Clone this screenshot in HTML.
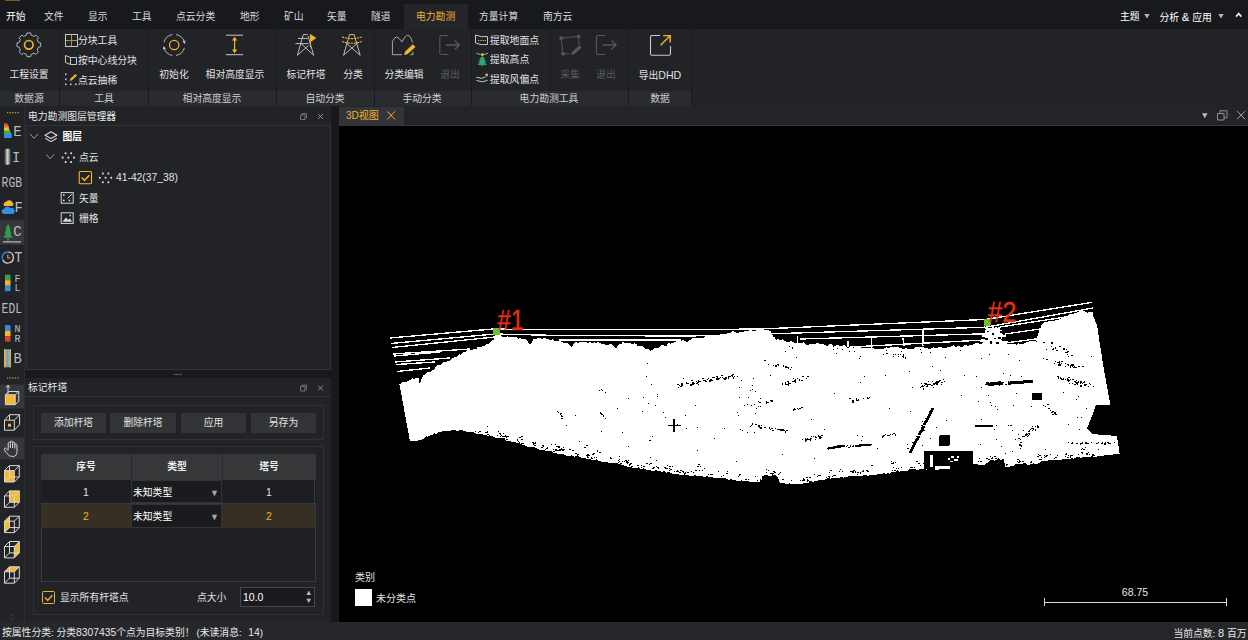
<!DOCTYPE html>
<html>
<head>
<meta charset="utf-8">
<title>电力勘测</title>
<style>
html,body{margin:0;padding:0;}
body{width:1248px;height:640px;overflow:hidden;background:#1b1c1f;position:relative;
 font-family:"Liberation Sans","Noto Sans CJK SC",sans-serif;font-size:9.8px;color:#e2e2e2;}
.abs{position:absolute;}
div,span{box-sizing:border-box;}
.t{position:absolute;white-space:nowrap;line-height:14px;height:14px;}
.c{transform:translateX(-50%);}
/* top tab bar */
#tabbar{position:absolute;left:0;top:0;width:1248px;height:29px;background:#18191c;}
#tabbar .t{top:10px;color:#dcdcdc;}
#acttab{position:absolute;left:404px;top:4px;width:63.6px;height:25px;background:#242529;}
/* ribbon */
#ribbon{position:absolute;left:0;top:29px;width:1248px;height:62px;background:#222327;}
#grow{position:absolute;left:0;top:91px;width:1248px;height:15px;background:#222327;}
#grow .g{position:absolute;top:0;height:15px;background:#2a2b2f;}
#grow .t{top:0;color:#d0d0d0;line-height:15px;height:15px;}
.sep{position:absolute;top:29px;width:1px;height:77px;background:#1a1b1e;}
#ribbon .t{color:#e6e6e6;}
.dis{color:#5a5b5f !important;}
/* docks */
#lefttb{position:absolute;left:0;top:106px;width:25px;height:516px;background:#222327;}
.ptitle{position:absolute;background:#222327;}
#status{position:absolute;left:0;top:622px;width:1248px;height:18px;background:#26272b;}
#status .t{top:3.7px;color:#e8e8e8;}
#view{position:absolute;left:339px;top:126px;width:909px;height:496px;background:#000;}
.btn{position:absolute;top:413px;height:20px;background:#333437;text-align:center;line-height:19px;color:#e0e0e0;}
.cell{position:absolute;text-align:center;}
</style>
</head>
<body>
<!-- ===== top tab bar ===== -->
<div id="tabbar">
 <div class="abs" style="left:5px;top:0;width:15px;height:1px;background:#7a5a22"></div>
 <div id="acttab"></div>
 <span class="t" style="left:6px;color:#fff">开始</span>
 <span class="t" style="left:44px">文件</span>
 <span class="t" style="left:88px">显示</span>
 <span class="t" style="left:132px">工具</span>
 <span class="t" style="left:176px">点云分类</span>
 <span class="t" style="left:240px">地形</span>
 <span class="t" style="left:284px">矿山</span>
 <span class="t" style="left:327px">矢量</span>
 <span class="t" style="left:371px">隧道</span>
 <span class="t" style="left:416px;color:#f0b232">电力勘测</span>
 <span class="t" style="left:479px">方量计算</span>
 <span class="t" style="left:543px">南方云</span>
 <span class="t" style="left:1120px;color:#fff">主题</span>
 <span class="t" style="left:1159.5px;color:#fff">分析 <span style="font-size:11.5px">&amp;</span> 应用</span>
 <svg class="abs" style="left:1140px;top:8px" width="108" height="16" viewBox="1140 8 108 16"><path d="M1144.3 14h5.4l-2.7 4.6z M1218.3 14h5.4l-2.7 4.6z" fill="#b5b5b5"/><path d="M1236 16.6l2.7-3l2.7 3" fill="none" stroke="#e6e6e6" stroke-width="1.7"/></svg>
</div>

<!-- ===== ribbon ===== -->
<div id="ribbon"></div>
<div id="grow">
 <div class="g" style="left:0;width:59px"></div>
 <div class="g" style="left:60px;width:88px"></div>
 <div class="g" style="left:149px;width:127px"></div>
 <div class="g" style="left:277px;width:97px"></div>
 <div class="g" style="left:375px;width:96px"></div>
 <div class="g" style="left:472px;width:156px"></div>
 <div class="g" style="left:629px;width:62px"></div>
 <span class="t c" style="left:29px">数据源</span>
 <span class="t c" style="left:104px">工具</span>
 <span class="t c" style="left:212px">相对高度显示</span>
 <span class="t c" style="left:325px">自动分类</span>
 <span class="t c" style="left:422px">手动分类</span>
 <span class="t c" style="left:549px">电力勘测工具</span>
 <span class="t c" style="left:660px">数据</span>
</div>
<div class="sep" style="left:59px"></div>
<div class="sep" style="left:148px"></div>
<div class="sep" style="left:276px"></div>
<div class="sep" style="left:374px"></div>
<div class="sep" style="left:471px"></div>
<div class="sep" style="left:550px;height:62px"></div>
<div class="sep" style="left:628px"></div>
<div class="sep" style="left:691px"></div>

<div id="ribtext" style="position:absolute;left:0;top:0">
 <span class="t c" style="left:29px;top:68px">工程设置</span>
 <span class="t" style="left:78px;top:33.5px">分块工具</span>
 <span class="t" style="left:78px;top:53.5px">按中心线分块</span>
 <span class="t" style="left:78px;top:73.5px">点云抽稀</span>
 <span class="t c" style="left:174px;top:68px">初始化</span>
 <span class="t c" style="left:235px;top:68px">相对高度显示</span>
 <span class="t c" style="left:306px;top:68px">标记杆塔</span>
 <span class="t c" style="left:353px;top:68px">分类</span>
 <span class="t c" style="left:404px;top:68px">分类编辑</span>
 <span class="t c dis" style="left:450px;top:68px">退出</span>
 <span class="t" style="left:490px;top:33.8px">提取地面点</span>
 <span class="t" style="left:490px;top:53.3px">提取高点</span>
 <span class="t" style="left:490px;top:73px">提取风偏点</span>
 <span class="t c dis" style="left:570px;top:68px">采集</span>
 <span class="t c dis" style="left:606px;top:68px">退出</span>
 <span class="t c" style="left:660px;top:68px">导出<span style="font-size:10.6px">DHD</span></span>
</div>
<!--RIBS--><svg style="position:absolute;left:0;top:0" width="700" height="92" viewBox="0 0 700 92"><path d="M26.49 35.17 L26.92 32.95 L30.68 32.95 L31.11 35.17 L33.97 36.36 L35.85 35.09 L38.51 37.75 L37.24 39.63 L38.43 42.49 L40.65 42.92 L40.65 46.68 L38.43 47.11 L37.24 49.97 L38.51 51.85 L35.85 54.51 L33.97 53.24 L31.11 54.43 L30.68 56.65 L26.92 56.65 L26.49 54.43 L23.63 53.24 L21.75 54.51 L19.09 51.85 L20.36 49.97 L19.17 47.11 L16.95 46.68 L16.95 42.92 L19.17 42.49 L20.36 39.63 L19.09 37.75 L21.75 35.09 L23.63 36.36Z" fill="none" stroke="#b4b4b4" stroke-width="1" stroke-linejoin="round"/>
<circle cx="28.8" cy="44.8" r="4.3" fill="none" stroke="#f0b429" stroke-width="1.7"/>
<path d="M71.5 34.5V46.5 M65.5 40.5H77.5" stroke="#b08d4c" stroke-width="1" fill="none"/><rect x="65.5" y="34.5" width="12" height="12" fill="none" stroke="#c9c9c9" stroke-width="1"/>
<path d="M65.5 55.5 L70.5 57.5 V64.5 L65.5 62.5 Z M70.5 57.5 H76.5 V64.5 H70.5" fill="none" stroke="#c9c9c9" stroke-width="1"/>
<rect x="65" y="73.5" width="1.6" height="1.6" fill="#c9c9c9"/><rect x="65" y="78.5" width="1.6" height="1.6" fill="#c9c9c9"/><rect x="65" y="83.5" width="1.6" height="1.6" fill="#c9c9c9"/><rect x="70" y="83.5" width="1.6" height="1.6" fill="#c9c9c9"/><rect x="75" y="83.5" width="1.6" height="1.6" fill="#c9c9c9"/><path d="M69.5 81 L70.5 78.5 L75.5 74 L77 75.5 L72 80.2 Z" fill="#f0b429"/>
<path d="M163.96 42.26 A10.6 10.6 0 0 1 172.36 34.56 M176.04 34.56 A10.6 10.6 0 0 1 184.44 42.26 M184.44 47.74 A10.6 10.6 0 0 1 176.04 55.44 M172.36 55.44 A10.6 10.6 0 0 1 163.96 47.74" fill="none" stroke="#b4b4b4" stroke-width="1"/>
<path d="M182.5 41.5 l3 -1 l-0.5 3.4z M166 48.5 l-3 1 l0.5 -3.4z" fill="#c9c9c9"/>
<circle cx="174.2" cy="45" r="4.7" fill="none" stroke="#f0b429" stroke-width="1.2"/>
<path d="M226 35.2H243 M226 54.7H243" stroke="#c9c9c9" stroke-width="1" fill="none"/>
<path d="M234.6 38.5V51.5" stroke="#f0b429" stroke-width="1.2" fill="none"/><path d="M234.6 36.8 l2.6 3.6 h-5.2z M234.6 53.2 l2.6 -3.6 h-5.2z" fill="#f0b429"/>
<path d="M303.3 34.6 H307.6 M303.3 34.6 L297.4 55.3 M308 36 L313.7 55.3 M297.4 55.3 L308.5 45.5 M313.7 55.3 L300.8 43.3 M298 38.4H307.8 M295.4 43.6H308.5" fill="none" stroke="#bdbdbd" stroke-width="1"/>
<path d="M310.4 34.2V47.3" stroke="#f0b429" stroke-width="1.1"/><path d="M310.6 34.2 L316.4 38 L310.6 41.9Z" fill="#f0b429"/>
<path d="M349.6 34.6 H354.1 M349.6 34.6 L343.5 55.3 M354.1 34.6 L360.2 55.3 M343.5 55.3 L356.7 43.8 M360.2 55.3 L347 43.8" fill="none" stroke="#bdbdbd" stroke-width="1"/>
<path d="M342 37 Q352 40.2 361.8 37 M342 41.6 Q352 44.8 361.8 41.6" fill="none" stroke="#f0b429" stroke-width="1.1" stroke-dasharray="2.2 0.8"/>
<path d="M402 54.7 H392.4 V41.5 Q394.5 37 396.5 37 Q398.5 37 402 41.9 Q405.5 35.2 407.8 35.2 Q410.5 35.5 412.6 42.5 M410.3 54.7H412.9V51.8" fill="none" stroke="#ababab" stroke-width="1"/>
<path d="M404 54.9 L405 51.8 L412.8 44.3 L415.5 47 L407.4 54.2 Z" fill="#f0b429"/>
<path d="M448.3 35.5 H441.3 Q439.8 35.5 439.8 37 V53 Q439.8 54.5 441.3 54.5 H448.3" fill="none" stroke="#56575b" stroke-width="1.1"/><path d="M445.8 45 H459.3 M454.8 40.5 L459.3 45 L454.8 49.5" fill="none" stroke="#56575b" stroke-width="1.4"/>
<path d="M605 35.5 H598 Q596.5 35.5 596.5 37 V53 Q596.5 54.5 598 54.5 H605" fill="none" stroke="#56575b" stroke-width="1.1"/><path d="M602.5 45 H616 M611.5 40.5 L616 45 L611.5 49.5" fill="none" stroke="#56575b" stroke-width="1.4"/>
<path d="M475.5 35 Q481 37.5 487.5 36.5 V44.5 Q481 45.5 475.5 43 Z" fill="none" stroke="#c9c9c9" stroke-width="1"/><path d="M478 40.5H486" stroke="#f0b429" stroke-width="1.2" stroke-dasharray="1.3 1" fill="none"/>
<path d="M482.3 56 L485.5 59.3 H484 L486.5 62.2 H484.6 L487 65 H477.6 L480 62.2 H478.1 L480.6 59.3 H479.1Z" fill="#2aa76a"/><rect x="481.6" y="64.5" width="1.4" height="1.6" fill="#2aa76a"/>
<circle cx="482.3" cy="54.6" r="1.5" fill="#f0b429"/><path d="M476.5 53.2 L480.5 54.6 M488 53.2 L484 54.6" stroke="#c9c9c9" stroke-width="0.8"/>
<path d="M476.5 77.3 Q482 79.5 485.5 77 M476.5 80.5 Q482.5 83.3 487.5 80.3" fill="none" stroke="#c9c9c9" stroke-width="1"/><circle cx="486.7" cy="75" r="1.4" fill="#f0b429"/>
<path d="M561.2 38.2 L578.6 36.4 L579 45 M561.2 38.2 L563 53.8 H569.5" fill="none" stroke="#56575b" stroke-width="1"/>
<circle cx="561.2" cy="38.2" r="1.9" fill="#56575b"/><circle cx="578.6" cy="36.4" r="1.9" fill="#56575b"/><circle cx="563" cy="53.8" r="1.9" fill="#56575b"/>
<path d="M571 55 L572 52 L579.5 45.2 L581.8 47.6 L574.2 54.2Z" fill="#56575b"/>
<path d="M660 35.5 H652 Q650.5 35.5 650.5 37 V53.8 Q650.5 55.3 652 55.3 H669 Q670.5 55.3 670.5 53.8 V46" fill="none" stroke="#c9c9c9" stroke-width="1.1"/>
<path d="M660.6 45.2 L670 35.8 M663.2 35.6 H670.2 V42.6" fill="none" stroke="#f0b429" stroke-width="1.4"/></svg><!--RIBE-->

<!-- ===== left toolbar ===== -->
<div id="lefttb"></div><div class="abs" style="left:24px;top:106px;width:1px;height:516px;background:#2c2d31"></div>
<!--LTS--><!--LTE-->

<!-- ===== layer manager panel ===== -->
<div class="abs" style="left:25px;top:106px;width:306px;height:264px;background:#222327"></div>
<div class="abs" style="left:26px;top:125px;width:305px;height:244.5px;background:#222327;border:1px solid #323338"></div>
<span class="t" style="left:28px;top:110px;color:#e8e8e8">电力勘测图层管理器</span>
<span class="t" style="left:62.5px;top:130.2px;color:#fff;font-weight:bold">图层</span>
<span class="t" style="left:79px;top:150.7px">点云</span>
<span class="t" style="left:116px;top:171px;font-size:10.3px">41-42(37_38)</span>
<span class="t" style="left:79px;top:191.7px">矢量</span>
<span class="t" style="left:79px;top:211.5px">栅格</span>

<!-- splitters -->
<div class="abs" style="left:25px;top:369.5px;width:315px;height:8.5px;background:#18191c"></div>
<div class="abs" style="left:331px;top:106px;width:9px;height:516px;background:#18191c"></div>

<!-- ===== mark tower panel ===== -->
<div class="abs" style="left:25px;top:378px;width:306px;height:244px;background:#222327"></div>
<span class="t" style="left:28px;top:381px;color:#e8e8e8">标记杆塔</span>
<div class="abs" style="left:25px;top:396px;width:306px;height:1px;background:#303135"></div>
<div class="abs" style="left:33px;top:405px;width:291px;height:35px;border:1px solid #303135"></div>
<div class="btn" style="left:41px;width:65px">添加杆塔</div>
<div class="btn" style="left:110px;width:66px">删除杆塔</div>
<div class="btn" style="left:181px;width:65px">应用</div>
<div class="btn" style="left:251px;width:65px">另存为</div>
<div class="abs" style="left:33px;top:446px;width:291px;height:168.5px;border:1px solid #303135"></div>
<!-- table -->
<div class="abs" style="left:41px;top:454px;width:275px;height:128px;background:#1f2023;border:1px solid #3a3b3f"></div>
<div class="abs" style="left:41px;top:454px;width:275px;height:26px;background:#363739"></div>
<div class="abs" style="left:131px;top:454px;width:1px;height:26px;background:#28292c"></div>
<div class="abs" style="left:222px;top:454px;width:1px;height:26px;background:#28292c"></div>
<span class="t c" style="left:86px;top:460px;font-weight:bold;color:#eee">序号</span>
<span class="t c" style="left:177px;top:460px;font-weight:bold;color:#eee">类型</span>
<span class="t c" style="left:269px;top:460px;font-weight:bold;color:#eee">塔号</span>
<!-- row1 -->
<div class="abs" style="left:41px;top:480px;width:275px;height:23px;background:#1d1e21"></div>
<div class="abs" style="left:131px;top:480px;width:91px;height:23px;background:#1a1b1e;border:1px solid #323337"></div>
<div class="abs" style="left:41px;top:503px;width:275px;height:1px;background:#38393d"></div>
<div class="abs" style="left:314px;top:480px;width:1px;height:23px;background:#38393d"></div>
<span class="t c" style="left:86px;top:485px;font-size:10.5px">1</span>
<span class="t" style="left:133px;top:485.6px;color:#fff">未知类型</span>
<span class="t" style="left:210px;top:485.5px;font-size:9px;color:#aaa">▼</span>
<span class="t c" style="left:269px;top:485px;font-size:10.5px">1</span>
<!-- row2 -->
<div class="abs" style="left:41px;top:504px;width:274px;height:23.5px;background:#362f24"></div>
<div class="abs" style="left:131px;top:504px;width:91px;height:24px;background:#1a1b1e;border:1px solid #323337"></div>
<span class="t c" style="left:86px;top:509px;font-size:10.5px;color:#f0b232">2</span>
<span class="t" style="left:133px;top:509.5px;color:#fff">未知类型</span>
<span class="t" style="left:210px;top:510px;font-size:9px;color:#aaa">▼</span>
<span class="t c" style="left:269px;top:509px;font-size:10.5px;color:#f0b232">2</span>
<!-- bottom controls -->
<div class="abs" style="left:41.8px;top:591px;width:13px;height:13px;border:1.1px solid #f0b429;border-radius:1.5px"></div>
<svg class="abs" style="left:41.8px;top:591px" width="13" height="13" viewBox="0 0 13 13"><path d="M3 6.6l2.7 2.9l4.6-5.2" fill="none" stroke="#f0b429" stroke-width="1.5"/></svg>
<span class="t" style="left:60px;top:590.5px">显示所有杆塔点</span>
<span class="t" style="left:197px;top:590.5px">点大小</span>
<div class="abs" style="left:240px;top:586.5px;width:75px;height:20.5px;background:#1a1b1e;border:1px solid #46474b"></div>
<span class="t" style="left:243px;top:590px;font-size:10.5px;color:#fff">10.0</span>
<span class="t" style="left:305px;top:585.6px;font-size:7.5px;color:#bbb">▲</span>
<span class="t" style="left:305px;top:594.2px;font-size:7.5px;color:#bbb">▼</span>

<!--LSVGS--><svg style="position:absolute;left:0;top:0" width="340" height="640" viewBox="0 0 340 640"><rect x="7.0" y="112" width="1.3" height="1.3" fill="#c9952f"/><rect x="9.6" y="112" width="1.3" height="1.3" fill="#c9952f"/><rect x="12.2" y="112" width="1.3" height="1.3" fill="#c9952f"/><rect x="14.8" y="112" width="1.3" height="1.3" fill="#c9952f"/><rect x="17.4" y="112" width="1.3" height="1.3" fill="#c9952f"/>
<rect x="7.0" y="377.3" width="1.3" height="1.3" fill="#c9952f"/><rect x="9.6" y="377.3" width="1.3" height="1.3" fill="#c9952f"/><rect x="12.2" y="377.3" width="1.3" height="1.3" fill="#c9952f"/><rect x="14.8" y="377.3" width="1.3" height="1.3" fill="#c9952f"/><rect x="17.4" y="377.3" width="1.3" height="1.3" fill="#c9952f"/>
<rect x="0" y="219.8" width="24" height="25" fill="#36373b"/><rect x="3" y="241.3" width="18" height="1.2" fill="#bdbdbd"/>
<path d="M4 138.0 V124.0 Q6.5 122.5 8 125.5 L9.5 130.5 L11.8 134.5 V138.0Z" fill="#2f8fe0"/><path d="M4 134.0 V124.0 Q6.5 122.5 8 125.5 L9.5 130.5 L11.4 134.0Z" fill="#3fae49"/><path d="M4 130.5 V124.0 Q6.5 122.5 8 125.5 L9.5 130.5Z" fill="#f2c232"/><path d="M4 128.0 V124.0 Q6.5 122.5 8 125.5 L8.7 128.0Z" fill="#f28b30"/><path d="M4 125.7 V124.0 Q6.5 122.5 8 125.5 L8 125.7Z" fill="#e2402a"/>
<defs><linearGradient id="gi" x1="0" x2="1" y1="0" y2="0"><stop offset="0" stop-color="#444"/><stop offset=".5" stop-color="#cfcfcf"/><stop offset="1" stop-color="#555"/></linearGradient></defs><rect x="4.5" y="148.7" width="6" height="16" rx="2" fill="url(#gi)"/>
<path d="M4 206.1 a3 3 0 0 1 2.5 -4.5 a3.4 3.4 0 0 1 6 0.8 a2.3 2.3 0 0 1 0 3.7Z" fill="#f2b632"/><path d="M3.5 214.1 a2.8 2.8 0 0 1 0.5 -5.4 a3.6 3.6 0 0 1 6.4 -0.6 a3 3 0 0 1 2 6Z" fill="#2f8fe0"/>
<path d="M8 223.8 L10.6 229.3 H9.6 L11.6 233.5 H10.2 L12.3 237.8 H3.7 L5.8 233.5 H4.4 L6.4 229.3 H5.4Z" fill="#2e9d4e"/><rect x="7.3" y="237.8" width="1.4" height="3" fill="#2e9d4e"/>
<path d="M7.8 252.0 A5.5 5.5 0 1 1 2.8 259.7" fill="none" stroke="#d8d8d8" stroke-width="1.2"/><path d="M2.6 259.5 A5.5 5.5 0 0 1 7.6 252.0" fill="none" stroke="#2f8fe0" stroke-width="1.3"/><path d="M7.8 254.5 V258.0 H10.8" fill="none" stroke="#f28b30" stroke-width="1.2"/>
<rect x="5" y="274.7" width="5.5" height="5.5" fill="#3fa043"/><rect x="5" y="280.2" width="5.5" height="5.5" fill="#f2b632"/><rect x="5" y="285.7" width="5.5" height="5.5" fill="#2f8fe0"/>
<rect x="5" y="325.1" width="5.5" height="5.5" fill="#2f8fe0"/><rect x="5" y="330.6" width="5.5" height="5.5" fill="#f2b632"/><rect x="5" y="336.1" width="5.5" height="5.5" fill="#d8452c"/>
<rect x="4" y="349.29999999999995" width="7" height="18" fill="#5f9fd0"/><rect x="4" y="349.29999999999995" width="1.8" height="18" fill="#e3b04a"/><rect x="9.4" y="349.29999999999995" width="1.6" height="18" fill="#e3b04a"/><path d="M6.6 350.29999999999995v16 M8.4 350.29999999999995v16" stroke="#d8c088" stroke-width="0.8" stroke-dasharray="1 1"/>
<g font-family="'Liberation Mono',monospace" fill="#bcbcbc"><text x="13.2" y="135.7" font-size="13.8">E</text><text x="12" y="161.6" font-size="13.8">I</text><text x="1.6" y="186.8" font-size="13.8" textLength="20.4" lengthAdjust="spacingAndGlyphs">RGB</text><text x="14.4" y="211.8" font-size="13.8">F</text><text x="13.2" y="236.2" font-size="13.8">C</text><text x="14.2" y="262.2" font-size="13.8">T</text><text x="14.5" y="281.5" font-size="10" >F</text><text x="14.5" y="291.1" font-size="10" >L</text><text x="1.6" y="312.8" font-size="13.8" textLength="20.4" lengthAdjust="spacingAndGlyphs">EDL</text><text x="14.5" y="331.9" font-size="10" >N</text><text x="14.5" y="341.5" font-size="10" >R</text><text x="13.6" y="363.0" font-size="13.8">B</text></g>
<rect x="0" y="384.5" width="24" height="24" fill="#36373b"/>
<rect x="0" y="437.5" width="24" height="22" fill="#36373b"/>
<rect x="5.4" y="394.8" width="9.8" height="9.8" fill="#f6b92c"/><path d="M5.4 394.8H15.2V404.6H5.4Z M5.4 394.8L9 391.5H18.8L15.2 394.8 M18.8 391.5V401.2L15.2 404.6" fill="none" stroke="#d8d8d8" stroke-width="1"/><path d="M8 394V385.5 M6.2 387.6L8 385.2L9.8 387.6" fill="none" stroke="#d8d8d8" stroke-width="1"/>
<path d="M4.5 420.2H14.3V430.2H4.5Z M4.5 420.2L9.5 414.7H19.6L14.3 420.2 M19.6 414.7V424.7L14.3 430.2 M9.5 414.7V420.2" fill="none" stroke="#d8d8d8" stroke-width="1"/><rect x="8" y="423.7" width="3" height="3" fill="#f6b92c"/>
<path d="M8.2 449.5 V443.5 a1.1 1.1 0 0 1 2.2 0 V448.0 M10.4 443.0 V442.2 a1.1 1.1 0 0 1 2.2 0 V448.0 M12.6 443.2 a1.1 1.1 0 0 1 2.2 0 V448.5 M14.8 445.2 a1.1 1.1 0 0 1 2.2 0 V451.5 Q17 456.5 12.5 456.5 Q9 456.5 7 453.5 L4.3 449.8 a1.2 1.2 0 0 1 1.9 -1.4 L8.2 450.7" fill="none" stroke="#d8d8d8" stroke-width="1" stroke-linejoin="round"/>
<rect x="4.5" y="470.6" width="9.8" height="11.4" fill="#f6b92c"/><path d="M4.5 470.6H14.3V482.0H4.5Z M9.5 465.6H19.3V477.0H9.5Z M4.5 470.6L9.5 465.6 M14.3 470.6L19.3 465.6 M14.3 482.0L19.3 477.0 M4.5 482.0L9.5 477.0" fill="none" stroke="#d8d8d8" stroke-width="1"/>
<rect x="9.5" y="490.9" width="9.8" height="11.4" fill="#f6b92c"/><path d="M4.5 495.9H14.3V507.3H4.5Z M9.5 490.9H19.3V502.3H9.5Z M4.5 495.9L9.5 490.9 M14.3 495.9L19.3 490.9 M14.3 507.3L19.3 502.3 M4.5 507.3L9.5 502.3" fill="none" stroke="#d8d8d8" stroke-width="1"/>
<path d="M4.5 521.2 L9.5 516.2 V527.6 L4.5 532.6Z" fill="#f6b92c"/><path d="M4.5 521.2H14.3V532.6H4.5Z M9.5 516.2H19.3V527.6H9.5Z M4.5 521.2L9.5 516.2 M14.3 521.2L19.3 516.2 M14.3 532.6L19.3 527.6 M4.5 532.6L9.5 527.6" fill="none" stroke="#d8d8d8" stroke-width="1"/>
<path d="M14.3 546.5 L19.3 541.5 V552.9 L14.3 557.9Z" fill="#f6b92c"/><path d="M4.5 546.5H14.3V557.9H4.5Z M9.5 541.5H19.3V552.9H9.5Z M4.5 546.5L9.5 541.5 M14.3 546.5L19.3 541.5 M14.3 557.9L19.3 552.9 M4.5 557.9L9.5 552.9" fill="none" stroke="#d8d8d8" stroke-width="1"/>
<path d="M4.5 571.8 L9.5 566.8 H19.3 L14.3 571.8Z" fill="#f6b92c"/><path d="M4.5 571.8H14.3V583.2H4.5Z M9.5 566.8H19.3V578.2H9.5Z M4.5 571.8L9.5 566.8 M14.3 571.8L19.3 566.8 M14.3 583.2L19.3 578.2 M4.5 583.2L9.5 578.2" fill="none" stroke="#d8d8d8" stroke-width="1"/>
<path d="M9.5 613.5l2.5 2.5l2.5-2.5 M9.5 617.5l2.5 2.5l2.5-2.5" fill="none" stroke="#3c3d41" stroke-width="1"/>
<path d="M300.5 115.0h4.5v4.5h-4.5z M302 115.0v-1.5h4.5v4.5h-1.5" fill="none" stroke="#77787c" stroke-width="0.9"/><path d="M318 114.0l5 5 M323 114.0l-5 5" stroke="#9a9b9f" stroke-width="0.9"/>
<path d="M300.5 386.5h4.5v4.5h-4.5z M302 386.5v-1.5h4.5v4.5h-1.5" fill="none" stroke="#77787c" stroke-width="0.9"/><path d="M318 385.5l5 5 M323 385.5l-5 5" stroke="#9a9b9f" stroke-width="0.9"/>
<path d="M30 133.8l4 4.6l4-4.6 M46.2 154.3l4 4.6l4-4.6" fill="none" stroke="#9a9a9a" stroke-width="1"/>
<path d="M51 131.8 L57 135.2 L51 138.6 L45 135.2Z M45.3 138.2 L51 141.6 L56.7 138.2" fill="none" stroke="#d8d8d8" stroke-width="1.1" stroke-linejoin="round"/>
<rect x="64.7" y="152.3" width="1.9" height="1.9" rx="0.6" fill="#d8d8d8"/><rect x="70.2" y="152.3" width="1.9" height="1.9" rx="0.6" fill="#d8d8d8"/><rect x="61.7" y="156.6" width="1.9" height="1.9" rx="0.6" fill="#d8d8d8"/><rect x="67.4" y="156.6" width="1.9" height="1.9" rx="0.6" fill="#d8d8d8"/><rect x="73.1" y="156.6" width="1.9" height="1.9" rx="0.6" fill="#d8d8d8"/><rect x="64.7" y="161.1" width="1.9" height="1.9" rx="0.6" fill="#d8d8d8"/><rect x="70.2" y="161.1" width="1.9" height="1.9" rx="0.6" fill="#d8d8d8"/>
<rect x="101.9" y="172.5" width="1.9" height="1.9" rx="0.6" fill="#d8d8d8"/><rect x="107.4" y="172.5" width="1.9" height="1.9" rx="0.6" fill="#d8d8d8"/><rect x="98.9" y="176.8" width="1.9" height="1.9" rx="0.6" fill="#d8d8d8"/><rect x="104.6" y="176.8" width="1.9" height="1.9" rx="0.6" fill="#d8d8d8"/><rect x="110.3" y="176.8" width="1.9" height="1.9" rx="0.6" fill="#d8d8d8"/><rect x="101.9" y="181.3" width="1.9" height="1.9" rx="0.6" fill="#d8d8d8"/><rect x="107.4" y="181.3" width="1.9" height="1.9" rx="0.6" fill="#d8d8d8"/>
<rect x="79.2" y="171.5" width="12.3" height="12.3" rx="1.2" fill="none" stroke="#f6b92c" stroke-width="1.1"/><path d="M81.8 177.5l2.7 2.9l4.8-5.2" fill="none" stroke="#f6b92c" stroke-width="1.5"/>
<rect x="61.2" y="192.6" width="12" height="10.6" fill="none" stroke="#d8d8d8" stroke-width="1"/><path d="M67.5 198.5 L72 194" stroke="#d8d8d8" stroke-width="0.9"/><rect x="63" y="194.3" width="1.6" height="1.6" fill="#d8d8d8"/><rect x="63" y="199.6" width="1.6" height="1.6" fill="#d8d8d8"/><rect x="68.6" y="199.6" width="1.6" height="1.6" fill="#d8d8d8"/>
<rect x="61.2" y="212.8" width="12" height="10.6" fill="none" stroke="#d8d8d8" stroke-width="1"/><path d="M62.5 221.8 L66 217.5 L68.2 220 L70 218.3 L72 221.8Z" fill="#d8d8d8"/><rect x="69.5" y="214.8" width="1.5" height="1.5" fill="#d8d8d8"/>
<rect x="174.0" y="373.8" width="1.3" height="1.3" fill="#8a6a2a"/><rect x="176.2" y="373.8" width="1.3" height="1.3" fill="#8a6a2a"/><rect x="178.4" y="373.8" width="1.3" height="1.3" fill="#8a6a2a"/><rect x="180.6" y="373.8" width="1.3" height="1.3" fill="#8a6a2a"/></svg><!--LSVGE-->
<!-- ===== 3D view ===== -->
<div class="abs" style="left:339px;top:106px;width:909px;height:20px;background:#222428"></div><div class="abs" style="left:339px;top:125px;width:909px;height:1px;background:#3a3b3e"></div>
<div class="abs" style="left:339px;top:107px;width:65px;height:19px;background:#333437"></div><svg class="abs" style="left:380px;top:106px" width="868" height="20" viewBox="380 106 868 20"><path d="M387.3 111.4l7.6 8 M394.9 111.4l-7.6 8" stroke="#f0b232" stroke-width="1"/><path d="M1202 113.2h5.6l-2.8 5z" fill="#bdbdbd"/><path d="M1217.5 113.5h6.5v6.5h-6.5z M1220 113.5v-2.7h7v7h-3" fill="none" stroke="#8e8f93" stroke-width="1" stroke-linejoin="round"/><path d="M1237.2 111.2l7.8 8 M1245 111.2l-7.8 8" stroke="#a8a8a8" stroke-width="1"/></svg>
<span class="t" style="left:346px;top:108.6px;color:#f0b232;font-size:10px">3D视图</span>
<div id="view">
<!--VIEWSTART--><svg style="position:absolute;left:0;top:0" width="909" height="496" viewBox="339 126 909 496" shape-rendering="crispEdges">
<path d="M399.5 384.5 L401.3 383.1 L403.2 381.8 L405.0 382.0 L407.5 381.5 L410.0 380.0 L412.0 378.2 L414.0 379.1 L416.0 378.1 L418.0 378.0 L418.7 378.7 L419.3 382.0 L420.0 384.0 L420.7 380.6 L421.3 379.8 L422.0 378.0 L423.5 375.2 L425.0 375.0 L427.5 372.3 L430.0 372.0 L431.7 370.4 L433.3 370.3 L435.0 368.0 L437.5 365.4 L440.0 365.0 L442.5 362.7 L445.0 362.0 L447.0 361.4 L449.0 361.3 L451.0 359.2 L453.0 357.7 L455.0 357.0 L457.0 357.4 L459.0 353.6 L461.0 355.1 L463.0 352.4 L465.0 352.0 L467.3 350.3 L469.7 349.5 L472.0 350.0 L474.0 348.7 L476.0 349.4 L478.0 346.8 L480.0 347.0 L482.0 346.5 L484.0 345.9 L486.0 344.4 L488.0 344.0 L490.0 342.8 L492.0 340.0 L494.0 340.0 L495.0 336.2 L496.0 335.0 L499.0 334.0 L500.5 334.6 L502.0 337.0 L504.0 337.5 L506.0 336.8 L508.0 336.4 L510.0 337.0 L512.0 337.5 L514.0 337.3 L516.0 337.0 L518.0 338.7 L520.0 338.0 L522.3 339.3 L524.7 338.6 L527.0 340.0 L528.5 342.7 L530.0 345.0 L531.0 343.1 L532.0 342.1 L533.0 339.0 L535.3 339.4 L537.7 337.7 L540.0 338.0 L542.0 339.7 L544.0 337.4 L546.0 338.5 L548.0 339.0 L550.3 340.4 L552.7 339.3 L555.0 341.0 L557.3 341.3 L559.7 340.3 L562.0 342.0 L564.0 342.8 L566.0 343.5 L568.0 343.0 L569.5 345.2 L571.0 347.0 L572.5 346.1 L574.0 343.0 L576.0 342.1 L578.0 342.9 L580.0 342.0 L582.0 342.3 L584.0 342.2 L586.0 341.9 L588.0 343.0 L590.0 342.0 L592.0 343.5 L594.0 342.3 L596.0 343.1 L598.0 341.5 L600.0 343.0 L602.0 343.8 L604.0 343.8 L606.0 345.1 L608.0 344.8 L610.0 344.0 L612.0 344.4 L614.0 346.0 L616.0 349.0 L617.5 346.2 L619.0 344.0 L621.0 344.2 L623.0 341.9 L625.0 343.0 L627.3 343.2 L629.7 342.7 L632.0 344.0 L634.0 343.4 L636.0 343.7 L638.0 346.3 L640.0 346.0 L642.0 345.9 L644.0 347.2 L646.0 349.0 L648.0 349.0 L650.0 350.8 L652.0 350.0 L654.0 348.1 L656.0 348.5 L658.0 348.0 L660.0 346.6 L662.0 345.0 L665.0 346.0 L666.5 345.7 L668.0 343.0 L670.3 343.6 L672.7 343.4 L675.0 342.0 L677.5 340.8 L680.0 341.0 L682.0 340.5 L684.0 340.2 L686.0 341.6 L688.0 341.6 L690.0 340.0 L692.0 338.6 L694.0 338.2 L696.0 338.0 L698.0 337.6 L700.0 338.0 L702.0 337.6 L704.0 337.5 L706.0 336.1 L708.0 334.9 L710.0 336.0 L712.0 335.6 L714.0 335.2 L716.0 335.6 L718.0 336.6 L720.0 335.0 L722.0 335.1 L724.0 334.0 L726.0 333.9 L728.0 333.0 L730.3 333.2 L732.7 331.0 L735.0 332.0 L737.0 333.0 L739.0 332.4 L741.0 332.5 L743.0 332.1 L745.0 331.0 L747.0 330.7 L749.0 330.7 L751.0 329.8 L753.0 331.4 L755.0 331.0 L757.0 329.5 L759.0 329.3 L761.0 329.5 L763.0 329.2 L765.0 330.0 L767.5 330.0 L770.0 331.0 L771.0 331.7 L772.0 333.5 L773.0 337.0 L774.5 337.5 L776.0 340.0 L778.2 339.1 L780.5 340.1 L782.8 339.3 L785.0 341.0 L787.0 342.5 L789.0 342.1 L791.0 341.1 L793.0 341.9 L795.0 343.0 L797.5 342.5 L800.0 343.0 L802.0 342.8 L804.0 342.3 L806.0 344.6 L808.0 345.3 L810.0 344.0 L812.1 344.0 L814.3 344.2 L816.4 343.2 L818.6 343.4 L820.7 344.2 L822.9 344.2 L825.0 345.0 L827.1 346.1 L829.3 344.3 L831.4 344.0 L833.6 346.9 L835.7 345.8 L837.9 344.8 L840.0 346.0 L842.0 346.3 L844.0 345.0 L846.0 346.7 L848.0 348.2 L850.0 347.0 L852.0 348.2 L854.0 347.8 L856.0 346.6 L858.0 347.0 L860.0 346.5 L862.0 348.4 L864.0 347.8 L866.0 348.6 L868.0 347.4 L870.0 348.0 L872.0 347.2 L874.0 348.9 L876.0 349.5 L878.0 349.1 L880.0 348.9 L882.0 349.0 L884.0 348.7 L886.0 347.2 L888.0 348.1 L890.0 347.6 L892.0 346.6 L894.0 346.6 L896.0 347.3 L898.0 347.3 L900.0 348.0 L902.1 348.6 L904.2 349.4 L906.2 347.8 L908.3 349.3 L910.4 349.5 L912.5 349.4 L914.6 347.6 L916.7 347.2 L918.8 347.2 L920.8 347.1 L922.9 347.1 L925.0 348.0 L927.1 348.2 L929.2 349.0 L931.2 348.6 L933.3 347.4 L935.4 347.8 L937.5 348.1 L939.6 345.9 L941.7 347.5 L943.8 348.1 L945.8 347.6 L947.9 347.4 L950.0 346.5 L952.0 346.3 L954.0 345.2 L956.0 346.9 L958.0 345.4 L960.0 346.7 L962.0 347.0 L964.0 345.1 L966.0 345.0 L968.0 346.5 L970.0 345.0 L972.0 345.5 L974.0 343.6 L976.0 343.3 L978.0 343.2 L980.0 344.0 L981.7 343.9 L983.3 342.3 L985.0 340.0 L986.7 337.3 L988.3 337.6 L990.0 335.0 L992.0 336.8 L994.0 336.1 L996.0 336.0 L997.8 337.1 L999.5 339.1 L1001.2 339.4 L1003.0 342.0 L1005.3 341.2 L1007.7 344.7 L1010.0 344.0 L1012.1 344.3 L1014.3 343.8 L1016.4 344.9 L1018.6 343.2 L1020.7 344.4 L1022.9 344.1 L1025.0 343.0 L1027.2 341.7 L1029.4 341.5 L1031.6 341.2 L1033.8 340.6 L1036.0 341.0 L1036.7 339.3 L1037.3 336.3 L1038.0 335.0 L1038.8 332.5 L1039.5 329.4 L1040.2 329.5 L1041.0 326.0 L1043.0 323.0 L1045.3 321.9 L1047.7 321.5 L1050.0 321.0 L1052.0 320.9 L1054.0 321.4 L1056.0 319.6 L1058.0 320.7 L1060.0 319.0 L1062.0 318.3 L1064.0 317.6 L1066.0 316.8 L1068.0 316.0 L1070.3 313.6 L1072.7 313.8 L1075.0 313.0 L1078.0 312.0 L1080.3 310.9 L1082.7 310.2 L1085.0 311.5 L1087.3 312.9 L1089.7 311.5 L1092.0 313.0 L1094.0 318.0 L1097.0 325.0 L1100.0 345.0 L1104.0 370.0 L1108.0 392.0 L1110.5 404.5 L1096.0 405.0 L1092.0 416.0 L1087.0 428.5 L1092.0 434.0 L1117.0 436.0 L1119.6 453.8 L1100.0 456.0 L1098.0 456.1 L1096.0 456.7 L1094.0 456.6 L1092.0 456.3 L1090.0 456.8 L1088.0 457.0 L1086.0 457.6 L1084.0 456.5 L1082.0 457.5 L1080.0 457.5 L1078.0 457.2 L1076.0 457.5 L1074.0 458.6 L1072.0 458.3 L1070.0 458.6 L1068.0 459.2 L1066.0 459.6 L1064.0 459.0 L1062.0 459.5 L1060.0 459.5 L1058.0 459.7 L1056.0 459.9 L1054.0 460.3 L1052.0 460.1 L1050.0 460.4 L1048.0 460.5 L1046.0 461.5 L1044.0 461.2 L1042.0 461.0 L1040.0 462.9 L1038.0 463.5 L1035.9 464.4 L1033.8 463.2 L1031.7 463.9 L1029.6 464.7 L1027.5 464.6 L1025.5 463.4 L1023.4 463.5 L1021.3 464.1 L1019.2 463.5 L1017.1 463.9 L1015.0 464.5 L1013.0 466.5 L1011.0 465.7 L1009.0 466.8 L1007.0 467.0 L1005.0 466.5 L1004.7 464.7 L1004.3 460.9 L1004.0 459.0 L1002.0 459.5 L1000.0 459.6 L998.0 458.8 L996.0 460.3 L994.0 460.6 L992.0 459.4 L990.0 460.0 L988.3 462.3 L986.7 462.8 L985.0 464.5 L983.0 464.5 L981.0 465.4 L979.0 465.1 L977.0 463.9 L975.0 464.4 L973.0 464.5 L970.9 464.8 L968.8 464.7 L966.7 464.6 L964.6 465.1 L962.5 466.0 L960.5 465.0 L958.4 466.2 L956.3 466.2 L954.2 465.7 L952.1 466.5 L950.0 467.0 L947.9 467.6 L945.7 467.8 L943.6 467.4 L941.4 469.4 L939.3 469.4 L937.1 470.2 L935.0 469.7 L932.9 468.9 L930.8 469.2 L928.7 468.7 L926.6 469.9 L924.5 469.0 L922.5 468.7 L920.4 469.1 L918.3 469.9 L916.2 469.7 L914.1 468.6 L912.0 469.0 L910.0 468.8 L908.0 470.7 L906.0 470.5 L904.0 471.2 L902.0 470.5 L900.0 471.7 L898.0 471.1 L896.0 472.5 L894.0 472.3 L892.0 471.9 L890.0 473.6 L888.0 473.3 L886.0 473.9 L884.0 472.8 L882.0 474.4 L880.0 474.0 L878.0 473.4 L876.0 475.1 L874.0 474.5 L872.0 474.5 L870.0 475.1 L868.0 476.0 L866.0 475.0 L864.0 474.9 L862.0 475.8 L860.0 476.0 L858.0 475.7 L856.0 475.6 L854.0 475.8 L852.0 475.8 L850.0 476.2 L848.0 476.6 L846.0 476.7 L844.0 477.7 L842.0 477.0 L840.0 477.5 L838.0 477.8 L836.0 477.5 L834.0 478.1 L832.0 477.8 L830.0 479.0 L827.9 478.8 L825.7 478.7 L823.6 480.3 L821.4 480.2 L819.3 479.9 L817.1 480.7 L815.0 481.0 L812.9 482.2 L810.7 481.1 L808.6 482.9 L806.4 482.6 L804.3 483.1 L802.1 484.2 L800.0 484.0 L798.0 483.7 L796.0 483.8 L794.0 484.0 L792.0 484.5 L790.0 483.2 L788.0 484.0 L786.0 483.7 L784.0 483.4 L782.0 482.9 L780.0 483.0 L779.0 480.4 L778.0 477.5 L777.0 476.0 L775.0 475.3 L773.0 475.2 L771.0 476.4 L769.0 475.6 L767.0 475.4 L765.0 475.3 L763.0 476.0 L762.0 478.6 L761.0 480.7 L760.0 482.0 L758.0 482.3 L756.0 481.6 L754.0 481.5 L752.0 481.6 L750.0 482.0 L747.9 481.6 L745.7 480.8 L743.6 481.0 L741.4 480.4 L739.3 481.4 L737.1 481.1 L735.0 480.0 L732.9 479.8 L730.7 479.0 L728.6 480.0 L726.4 478.5 L724.3 478.3 L722.1 477.4 L720.0 478.0 L717.9 477.6 L715.7 477.7 L713.6 477.6 L711.4 476.9 L709.3 477.3 L707.1 476.3 L705.0 477.0 L702.9 476.4 L700.7 476.0 L698.6 476.4 L696.4 475.6 L694.3 475.4 L692.1 475.8 L690.0 476.0 L687.9 475.2 L685.7 475.4 L683.6 475.0 L681.4 475.0 L679.3 474.5 L677.1 474.2 L675.0 473.5 L672.9 473.8 L670.7 472.6 L668.6 472.1 L666.4 472.9 L664.3 471.1 L662.1 471.8 L660.0 471.0 L658.0 471.0 L656.0 469.7 L654.0 470.9 L652.0 470.7 L650.0 470.0 L648.0 469.9 L646.0 469.8 L644.0 468.4 L642.0 468.8 L640.0 468.5 L638.0 468.1 L636.0 468.3 L634.0 467.9 L632.0 467.5 L630.0 466.7 L628.0 466.9 L626.0 466.1 L624.0 465.7 L622.0 464.5 L620.0 464.6 L618.0 463.4 L616.0 463.2 L614.0 463.3 L612.0 462.4 L610.0 463.4 L608.0 462.5 L606.0 462.3 L604.0 461.9 L602.0 461.7 L600.0 461.0 L598.0 460.6 L596.0 459.4 L594.0 460.5 L592.0 460.0 L590.0 459.2 L588.0 458.9 L586.0 458.8 L584.0 457.3 L582.0 458.2 L580.0 457.0 L578.0 456.3 L576.0 456.3 L574.0 456.7 L572.0 455.4 L570.0 455.6 L568.0 455.6 L566.0 455.7 L564.0 454.4 L562.0 453.8 L560.0 453.6 L558.0 453.6 L556.0 453.4 L554.0 452.7 L552.0 452.4 L550.0 451.0 L548.0 450.7 L546.0 450.5 L544.0 451.0 L542.0 449.8 L540.0 449.8 L538.0 449.3 L536.0 447.8 L534.0 447.3 L532.0 447.1 L530.0 447.2 L528.0 446.7 L526.0 446.1 L524.0 444.8 L522.0 444.6 L520.0 444.0 L518.0 443.3 L516.0 442.7 L514.0 441.5 L512.0 442.3 L510.0 440.5 L508.0 441.3 L506.0 440.6 L504.0 438.3 L502.0 438.5 L500.0 438.0 L497.9 438.2 L495.8 438.0 L493.8 436.7 L491.7 435.9 L489.6 435.4 L487.5 436.3 L485.4 434.6 L483.3 434.8 L481.2 433.6 L479.2 433.9 L477.1 434.2 L475.0 433.0 L472.8 431.8 L470.7 432.6 L468.5 431.5 L466.3 431.7 L464.2 430.9 L462.0 430.0 L460.0 429.7 L458.0 431.1 L456.0 430.5 L454.0 429.9 L452.0 430.0 L450.0 431.1 L448.0 431.2 L446.0 431.1 L444.0 431.0 L442.0 431.5 L440.0 432.0 L438.0 432.3 L436.0 434.0 L434.0 433.1 L432.0 435.2 L430.0 435.4 L428.1 436.8 L426.3 436.3 L424.4 438.6 L422.6 439.0 L420.7 440.1 L418.9 439.8 L417.0 441.0 L414.7 440.9 L412.3 441.1 L410.0 441.5Z" fill="#fff"/>
<path d="M390.0 338.0 L493.0 329.0 L541.0 329.7 L680.0 329.7 L760.0 329.0 L985.0 319.5 L1092.0 302.4 M391.0 343.5 L495.0 334.0 L560.0 335.5 L690.0 336.0 L770.0 333.8 L985.0 327.3 L1093.0 308.0 M392.0 347.5 L495.0 337.0 M559.0 340.0 L681.0 340.0 M800.0 339.0 L985.0 333.8 M1000.0 327.0 L1093.0 312.8 M850.0 347.0 L985.0 340.0 M1005.0 334.0 L1040.0 329.0 M1005.0 343.0 L1038.0 338.7 M393.0 354.0 L470.0 349.0 M394.0 356.0 L440.0 352.0 M395.0 362.0 L450.0 358.0 M396.0 364.5 L435.0 362.0 M397.0 371.5 L430.0 368.0" fill="none" stroke="#fff" stroke-width="1.35"/>
<path d="M988 328 L999 328 L1003 335 L1001 340 L1006 346 L982 346 L986 340 L984 335Z" fill="#fff"/><path d="M984 327 L1004 344 M1000 327 L983 345 M987 327 L990 345 M996 327 L1000 346 M982 336 L1006 336 M980 341 L1008 342 M985 331 L1002 331 M871.5 336.5V347 M923 328.5V346 M903 338l1 8 M848 341v6 M797.5 336v7 M496 334 L497 342 M993 326 L994 336" fill="none" stroke="#fff" stroke-width="1.5"/>
<path d="M499 433h2v1h-2z M497 435h1v1h-1z M501 435h1v1h-1z M503 433h1v1h-1z M487 426h1v1h-1z M498 431h1v1h-1z M475 431h1v1h-1z M479 431h2v1h-2z M478 432h1v1h-1z M487 434h2v1h-2z M487 431h1v1h-1z M485 432h1v1h-1z M486 432h2v1h-2z M504 436h2v1h-2z M500 434h1v1h-1z M502 436h1v1h-1z M502 436h2v1h-2z M503 438h2v1h-2z M501 435h1v1h-1z M506 437h1v1h-1z M503 438h2v1h-2z M500 436h1v1h-1z M506 439h2v1h-2z M521 439h2v1h-2z M519 442h1v1h-1z M517 439h1v1h-1z M517 440h1v1h-1z M518 441h1v1h-1z M519 443h1v1h-1z M507 436h2v1h-2z M505 435h1v1h-1z M506 436h2v1h-2z M508 436h1v1h-1z M532 442h2v1h-2z M535 442h1v1h-1z M520 437h1v1h-1z M521 436h1v1h-1z M522 436h1v1h-1z M519 437h1v1h-1z M523 443h1v1h-1z M521 443h1v1h-1z M520 445h1v1h-1z M522 443h1v1h-1z M533 444h1v1h-1z M533 443h2v1h-2z M535 443h1v1h-1z M534 445h2v1h-2z M546 448h1v1h-1z M545 449h1v1h-1z M546 448h2v1h-2z M543 450h2v1h-2z M547 448h1v1h-1z M547 447h1v1h-1z M542 445h1v1h-1z M543 446h1v1h-1z M542 445h2v1h-2z M541 447h2v1h-2z M562 450h1v1h-1z M561 449h1v1h-1z M562 450h2v1h-2z M563 447h1v1h-1z M563 449h2v1h-2z M558 450h1v1h-1z M553 451h2v1h-2z M553 451h1v1h-1z M551 451h1v1h-1z M553 449h1v1h-1z M555 449h2v1h-2z M557 450h1v1h-1z M559 449h1v1h-1z M555 450h2v1h-2z M553 451h1v1h-1z M556 450h1v1h-1z M592 454h1v1h-1z M593 453h2v1h-2z M593 454h1v1h-1z M589 455h1v1h-1z M587 454h2v1h-2z M586 445h2v1h-2z M584 447h2v1h-2z M597 451h1v1h-1z M599 452h2v1h-2z M597 450h1v1h-1z M572 450h2v1h-2z M569 449h2v1h-2z M573 450h1v1h-1z M577 454h2v1h-2z M575 453h1v1h-1z M577 455h1v1h-1z M576 453h1v1h-1z M619 459h1v1h-1z M622 461h1v1h-1z M618 460h1v1h-1z M619 461h1v1h-1z M610 458h2v1h-2z M610 457h1v1h-1z M618 462h1v1h-1z M620 464h1v1h-1z M620 463h2v1h-2z M638 467h1v1h-1z M641 467h1v1h-1z M641 465h1v1h-1z M637 465h2v1h-2z M629 464h2v1h-2z M631 466h2v1h-2z M629 465h1v1h-1z M627 463h1v1h-1z M628 462h1v1h-1z M630 463h2v1h-2z M626 462h2v1h-2z M626 461h2v1h-2z M628 460h1v1h-1z M624 461h1v1h-1z M625 460h2v1h-2z M643 466h2v1h-2z M641 467h1v1h-1z M645 469h1v1h-1z M654 467h1v1h-1z M657 467h2v1h-2z M652 468h2v1h-2z M653 467h1v1h-1z M646 463h2v1h-2z M649 464h1v1h-1z M650 463h2v1h-2z M656 466h1v1h-1z M658 468h1v1h-1z M664 467h2v1h-2z M669 468h1v1h-1z M667 468h1v1h-1z M665 468h1v1h-1z M666 468h1v1h-1z M670 469h2v1h-2z M669 466h2v1h-2z M667 465h1v1h-1z M672 466h1v1h-1z M669 470h1v1h-1z M677 470h1v1h-1z M677 471h2v1h-2z M676 471h1v1h-1z M674 471h1v1h-1z M677 470h1v1h-1z M679 472h1v1h-1z M680 472h1v1h-1z M684 473h2v1h-2z M682 471h2v1h-2z M687 472h2v1h-2z M680 470h2v1h-2z M685 472h1v1h-1z M684 474h1v1h-1z M685 472h1v1h-1z M683 472h1v1h-1z M694 475h2v1h-2z M691 471h1v1h-1z M695 470h2v1h-2z M693 472h1v1h-1z M698 464h2v1h-2z M697 466h2v1h-2z M700 466h1v1h-1z M702 470h1v1h-1z M699 470h1v1h-1z M704 468h1v1h-1z M712 474h1v1h-1z M708 474h1v1h-1z M710 474h2v1h-2z M718 471h1v1h-1z M721 476h1v1h-1z M723 475h1v1h-1z M726 473h2v1h-2z M727 471h1v1h-1z M746 479h1v1h-1z M739 474h2v1h-2z M739 475h1v1h-1z M738 476h1v1h-1z M747 481h2v1h-2z M748 479h1v1h-1z M748 479h1v1h-1z M745 479h1v1h-1z M755 476h1v1h-1z M760 480h1v1h-1z M757 480h1v1h-1z M760 479h1v1h-1z M774 471h1v1h-1z M773 471h1v1h-1z M771 473h2v1h-2z M774 472h2v1h-2z M766 472h1v1h-1z M766 472h1v1h-1z M768 470h1v1h-1z M766 469h1v1h-1z M772 474h1v1h-1z M770 473h1v1h-1z M772 473h2v1h-2z M783 479h1v1h-1z M782 479h2v1h-2z M802 480h2v1h-2z M800 480h1v1h-1z M802 480h1v1h-1z M791 480h1v1h-1z M780 472h1v1h-1z M779 473h1v1h-1z M778 474h1v1h-1z M778 474h1v1h-1z M809 481h1v1h-1z M804 480h1v1h-1z M807 481h1v1h-1z M807 480h2v1h-2z M804 479h1v1h-1z M807 479h1v1h-1z M803 478h1v1h-1z M803 479h1v1h-1z M804 480h1v1h-1z M809 477h2v1h-2z M810 477h1v1h-1z M806 477h1v1h-1z M806 477h1v1h-1z M810 477h1v1h-1z M806 477h2v1h-2z M814 474h1v1h-1z M817 476h1v1h-1z M820 475h1v1h-1z M818 475h2v1h-2z M830 470h2v1h-2z M829 472h1v1h-1z M826 477h1v1h-1z M829 478h1v1h-1z M828 476h1v1h-1z M827 478h2v1h-2z M829 476h1v1h-1z M829 477h1v1h-1z M832 476h1v1h-1z M834 475h2v1h-2z M833 475h2v1h-2z M840 469h1v1h-1z M839 471h1v1h-1z M842 471h1v1h-1z M853 471h1v1h-1z M850 471h2v1h-2z M851 471h2v1h-2z M853 470h2v1h-2z M853 472h1v1h-1z M850 471h1v1h-1z M857 472h2v1h-2z M857 474h1v1h-1z M852 472h1v1h-1z M855 472h1v1h-1z M855 471h1v1h-1z M855 471h1v1h-1z M871 465h2v1h-2z M860 472h1v1h-1z M863 470h1v1h-1z M862 471h2v1h-2z M867 471h2v1h-2z M866 470h2v1h-2z M867 470h1v1h-1z M860 473h1v1h-1z M892 470h1v1h-1z M895 462h1v1h-1z M891 461h1v1h-1z M893 462h1v1h-1z M891 463h2v1h-2z M893 463h1v1h-1z M895 462h1v1h-1z M894 470h2v1h-2z M896 471h1v1h-1z M897 470h1v1h-1z M893 467h1v1h-1z M898 468h1v1h-1z M901 467h1v1h-1z M896 468h1v1h-1z M903 471h1v1h-1z M911 467h2v1h-2z M910 467h1v1h-1z M917 461h1v1h-1z M916 461h1v1h-1z M918 463h2v1h-2z M926 467h1v1h-1z M929 468h1v1h-1z M925 469h1v1h-1z M914 467h1v1h-1z M923 463h2v1h-2z M920 465h1v1h-1z M923 463h1v1h-1z M949 462h1v1h-1z M951 462h1v1h-1z M942 460h2v1h-2z M943 462h1v1h-1z M947 461h2v1h-2z M951 465h1v1h-1z M946 462h1v1h-1z M946 462h1v1h-1z M946 464h1v1h-1z M950 462h2v1h-2z M946 464h1v1h-1z M964 462h1v1h-1z M965 460h1v1h-1z M966 461h1v1h-1z M962 460h2v1h-2z M963 461h1v1h-1z M966 459h1v1h-1z M955 463h1v1h-1z M959 462h1v1h-1z M958 463h1v1h-1z M959 464h1v1h-1z M953 462h1v1h-1z M958 459h2v1h-2z M957 462h2v1h-2z M953 459h1v1h-1z M952 461h1v1h-1z M950 460h1v1h-1z M951 460h1v1h-1z M978 461h1v1h-1z M980 461h2v1h-2z M979 458h1v1h-1z M989 459h1v1h-1z M991 458h2v1h-2z M986 458h2v1h-2z M988 459h2v1h-2z M998 458h1v1h-1z M995 458h2v1h-2z M1005 453h1v1h-1z M992 457h1v1h-1z M990 456h1v1h-1z M994 456h2v1h-2z M991 458h1v1h-1z M1006 464h2v1h-2z M1006 465h1v1h-1z M1019 461h2v1h-2z M1022 461h2v1h-2z M1017 459h2v1h-2z M1019 460h1v1h-1z M1039 459h1v1h-1z M1040 459h2v1h-2z M1038 454h1v1h-1z M1037 456h1v1h-1z M1037 456h2v1h-2z M1018 462h2v1h-2z M1017 461h1v1h-1z M1031 461h1v1h-1z M1030 462h2v1h-2z M1057 455h1v1h-1z M1054 458h1v1h-1z M1056 457h1v1h-1z M1055 457h1v1h-1z M1045 449h1v1h-1z M1046 455h2v1h-2z M1041 457h1v1h-1z M1044 455h1v1h-1z M1039 455h2v1h-2z M1044 457h1v1h-1z M1045 456h2v1h-2z M1066 453h1v1h-1z M1066 453h1v1h-1z M1065 456h1v1h-1z M1065 454h2v1h-2z M1070 455h2v1h-2z M1071 455h2v1h-2z M1070 457h1v1h-1z M1067 457h2v1h-2z M1068 455h1v1h-1z M1070 456h1v1h-1z M1082 453h1v1h-1z M1078 454h1v1h-1z M1081 452h2v1h-2z M1094 455h1v1h-1z M1092 455h2v1h-2z M1092 454h2v1h-2z M1082 448h1v1h-1z M1081 449h1v1h-1z M1083 449h2v1h-2z M1085 447h1v1h-1z M1086 453h2v1h-2z M1086 454h2v1h-2z M1089 454h1v1h-1z M1086 453h1v1h-1z M1087 453h1v1h-1z M1088 452h1v1h-1z M691 380h2v1h-2z M717 379h1v1h-1z M728 377h1v2h-1z M696 383h1v1h-1z M733 378h1v1h-1z M692 382h2v2h-2z M707 379h1v1h-1z M723 378h1v1h-1z M718 378h1v2h-1z M686 382h1v2h-1z M732 374h2v1h-2z M712 377h2v1h-2z M709 380h1v2h-1z M725 378h2v1h-2z M716 379h1v1h-1z M711 379h1v1h-1z M697 383h1v1h-1z M698 384h1v1h-1z M712 380h1v1h-1z M734 376h1v1h-1z M706 381h1v1h-1z M717 378h2v1h-2z M703 380h2v1h-2z M702 378h2v1h-2z M697 382h1v1h-1z M716 378h1v1h-1z M679 385h1v1h-1z M698 381h1v1h-1z M707 379h1v1h-1z M678 384h1v1h-1z M718 378h2v1h-2z M710 379h2v2h-2z M678 387h1v1h-1z M728 376h2v1h-2z M681 383h2v2h-2z M730 376h1v1h-1z M713 377h2v1h-2z M694 383h1v1h-1z M680 386h2v1h-2z M699 381h2v1h-2z M690 384h2v2h-2z M725 377h2v1h-2z M737 376h1v1h-1z M697 382h2v1h-2z M681 385h2v1h-2z M698 382h1v1h-1z M716 378h1v1h-1z M696 381h1v1h-1z M677 384h2v1h-2z M708 378h1v1h-1z M688 383h1v1h-1z M709 381h2v1h-2z M722 377h1v1h-1z M732 375h1v2h-1z M720 377h1v1h-1z M724 378h2v2h-2z M716 376h2v1h-2z M733 377h1v1h-1z M686 383h2v1h-2z M697 383h1v1h-1z M716 376h2v1h-2z M721 375h2v1h-2z M705 380h1v2h-1z M692 384h2v1h-2z M698 380h1v1h-1z M717 377h1v1h-1z M686 383h1v1h-1z M710 379h1v1h-1z M731 375h1v1h-1z M718 378h1v1h-1z M758 401h1v1h-1z M754 432h1v1h-1z M750 390h1v1h-1z M748 397h1v1h-1z M759 402h1v1h-1z M744 405h1v1h-1z M752 423h1v1h-1z M751 405h1v1h-1z M752 389h1v1h-1z M752 424h1v1h-1z M754 404h1v1h-1z M740 429h1v1h-1z M756 408h1v1h-1z M739 387h1v1h-1z M755 391h1v1h-1z M742 430h1v1h-1z M739 397h1v1h-1z M737 412h1v1h-1z M738 415h1v1h-1z M747 404h1v1h-1z M753 378h1v1h-1z M752 385h1v1h-1z M650 440h1v1h-1z M579 441h1v1h-1z M642 411h1v1h-1z M648 403h1v1h-1z M619 456h1v1h-1z M655 405h1v1h-1z M697 450h1v1h-1z M617 408h1v1h-1z M657 396h1v1h-1z M628 398h1v1h-1z M685 415h1v1h-1z M575 415h1v1h-1z M695 405h1v1h-1z M622 432h1v1h-1z M601 431h1v1h-1z M566 425h1v1h-1z M697 427h1v1h-1z M665 417h1v1h-1z M663 412h1v1h-1z M650 457h1v1h-1z M628 446h1v1h-1z M605 418h1v1h-1z M651 384h1v1h-1z M714 438h1v1h-1z M724 428h1v1h-1z M649 440h1v1h-1z M643 397h1v1h-1z M657 394h1v1h-1z M755 413h1v1h-1z M747 432h1v1h-1z M652 436h1v1h-1z M677 424h1v1h-1z M686 428h1v1h-1z M683 378h1v1h-1z M656 460h1v1h-1z M741 380h1v1h-1z M647 363h1v1h-1z M736 461h1v1h-1z M760 398h1v1h-1z M646 376h1v1h-1z M793 378h1v1h-1z M787 384h1v1h-1z M807 376h2v1h-2z M782 383h1v2h-1z M788 384h1v2h-1z M785 384h1v1h-1z M785 383h1v1h-1z M794 380h1v1h-1z M786 384h2v1h-2z M799 380h1v1h-1z M792 381h1v1h-1z M799 379h1v1h-1z M785 382h1v1h-1z M788 383h2v1h-2z M788 382h1v1h-1z M787 381h2v1h-2z M795 379h1v1h-1z M802 376h2v1h-2z M797 378h1v1h-1z M793 381h1v1h-1z M788 383h1v1h-1z M793 381h1v1h-1z M795 381h1v2h-1z M806 378h1v1h-1z M794 380h1v2h-1z M790 383h1v1h-1z M795 380h1v1h-1z M801 380h2v1h-2z M771 401h1v1h-1z M766 402h2v1h-2z M770 400h1v1h-1z M772 400h1v2h-1z M771 400h2v1h-2z M760 402h1v1h-1z M771 400h2v1h-2z M766 402h1v2h-1z M768 402h1v1h-1z M766 401h1v1h-1z M793 410h1v1h-1z M799 408h2v1h-2z M793 409h2v1h-2z M801 407h2v1h-2z M798 409h1v1h-1z M800 408h1v1h-1z M795 409h1v1h-1z M794 408h1v1h-1z M797 408h1v1h-1z M793 409h1v1h-1z M782 429h2v1h-2z M759 426h1v2h-1z M759 426h1v1h-1z M771 428h1v1h-1z M783 430h1v1h-1z M780 429h2v2h-2z M769 427h1v2h-1z M760 427h2v2h-2z M781 429h2v1h-2z M777 429h2v1h-2z M786 430h1v1h-1z M758 425h2v1h-2z M782 430h1v1h-1z M750 426h1v1h-1z M779 429h2v1h-2z M772 428h1v1h-1z M778 429h1v1h-1z M758 425h1v2h-1z M775 428h1v1h-1z M764 427h2v1h-2z M755 424h2v1h-2z M769 427h1v2h-1z M772 430h2v1h-2z M781 429h1v1h-1z M770 429h1v1h-1z M761 425h1v1h-1z M783 430h2v1h-2z M786 430h2v1h-2z M785 431h1v2h-1z M751 425h1v1h-1z M810 440h1v1h-1z M813 436h1v1h-1z M805 440h2v1h-2z M806 440h1v1h-1z M805 438h1v2h-1z M815 437h2v1h-2z M815 436h1v2h-1z M807 438h1v1h-1z M808 439h1v1h-1z M810 438h2v1h-2z M805 441h1v1h-1z M819 437h2v2h-2z M821 435h2v1h-2z M811 436h1v1h-1z M818 436h1v1h-1z M820 436h1v2h-1z M809 439h2v1h-2z M819 436h2v1h-2z M807 439h1v1h-1z M806 439h1v1h-1z M818 435h1v1h-1z M802 439h1v1h-1z M828 447h3v2h-3z M830 447h3v2h-3z M832 447h3v2h-3z M833 446h3v2h-3z M835 446h3v2h-3z M837 445h3v2h-3z M838 446h3v2h-3z M840 445h3v2h-3z M842 445h3v2h-3z M859 445h1v1h-1z M850 445h1v1h-1z M847 445h1v1h-1z M832 448h1v1h-1z M832 447h1v1h-1z M841 446h1v1h-1z M855 445h1v1h-1z M838 447h1v1h-1z M860 446h1v1h-1z M870 444h1v1h-1z M847 445h1v1h-1z M852 446h2v1h-2z M850 446h1v1h-1z M853 445h1v1h-1z M856 445h2v1h-2z M828 449h1v1h-1z M871 444h1v1h-1z M852 446h1v1h-1z M866 444h1v2h-1z M864 444h1v1h-1z M840 447h1v1h-1z M868 444h2v1h-2z M831 448h1v1h-1z M858 445h1v1h-1z M858 445h2v2h-2z M848 447h2v1h-2z M835 447h2v1h-2z M846 446h1v1h-1z M827 448h2v1h-2z M867 444h1v1h-1z M855 445h3v2h-3z M857 445h3v2h-3z M859 444h3v2h-3z M861 444h3v2h-3z M862 444h3v2h-3z M864 444h3v2h-3z M866 444h3v2h-3z M868 444h3v2h-3z M895 434h1v2h-1z M885 434h1v1h-1z M890 434h1v1h-1z M888 435h2v1h-2z M893 433h2v1h-2z M884 435h1v1h-1z M882 436h1v2h-1z M883 435h2v1h-2z M888 435h2v1h-2z M883 435h2v1h-2z M892 434h1v1h-1z M883 436h1v1h-1z M889 435h1v1h-1z M887 435h2v1h-2z M940 380h1v1h-1z M944 381h1v1h-1z M943 379h1v1h-1z M925 384h1v1h-1z M928 384h2v1h-2z M936 381h2v1h-2z M928 384h1v1h-1z M924 383h2v1h-2z M921 383h1v1h-1z M926 386h1v1h-1z M932 381h1v1h-1z M927 384h2v1h-2z M923 386h1v1h-1z M928 384h1v1h-1z M935 382h2v1h-2z M930 384h1v1h-1z M934 383h2v1h-2z M936 383h2v2h-2z M937 381h2v2h-2z M927 385h1v1h-1z M926 384h2v1h-2z M921 383h1v1h-1z M933 383h2v2h-2z M939 380h1v2h-1z M928 381h1v1h-1z M922 385h1v1h-1z M926 383h1v1h-1z M921 386h2v1h-2z M924 385h1v1h-1z M923 388h1v2h-1z M941 382h2v1h-2z M941 384h1v1h-1z M926 386h2v1h-2z M931 385h2v1h-2z M920 387h1v1h-1z M931 408h3v2h-3z M930 410h3v2h-3z M929 412h3v2h-3z M928 414h3v2h-3z M927 416h3v2h-3z M926 418h3v2h-3z M925 420h3v2h-3z M924 421h3v2h-3z M923 423h3v2h-3z M922 426h3v2h-3z M921 428h3v2h-3z M920 430h3v2h-3z M919 431h3v2h-3z M918 433h3v2h-3z M917 436h3v2h-3z M916 438h3v2h-3z M915 439h3v2h-3z M914 441h3v2h-3z M913 443h3v2h-3z M912 445h3v2h-3z M911 447h3v2h-3z M910 449h3v2h-3z M909 451h3v2h-3z M913 442h2v1h-2z M920 432h1v1h-1z M929 411h1v1h-1z M921 425h2v1h-2z M912 442h1v1h-1z M922 421h1v1h-1z M922 427h1v2h-1z M922 426h1v1h-1z M928 417h1v1h-1z M925 418h1v1h-1z M924 424h1v1h-1z M913 447h1v1h-1z M912 442h1v1h-1z M931 409h2v1h-2z M916 436h1v1h-1z M914 441h1v1h-1z M921 427h2v1h-2z M924 421h1v1h-1z M929 411h1v2h-1z M912 446h1v1h-1z M921 432h1v1h-1z M923 430h2v1h-2z M907 448h2v1h-2z M909 451h1v2h-1z M919 433h1v1h-1z M986 382h3v3h-3z M988 383h3v3h-3z M990 382h3v3h-3z M991 383h3v3h-3z M993 382h3v3h-3z M995 382h3v3h-3z M996 382h3v3h-3z M998 381h3v3h-3z M1000 382h3v3h-3z M1008 382h3v3h-3z M1010 381h3v3h-3z M1012 381h3v3h-3z M1014 381h3v3h-3z M1015 381h3v3h-3z M1017 381h3v3h-3z M1019 381h3v3h-3z M1021 381h3v3h-3z M1023 380h3v3h-3z M1024 380h3v3h-3z M1026 380h3v3h-3z M1028 380h3v3h-3z M1030 380h3v3h-3z M999 383h1v1h-1z M1003 382h1v1h-1z M1009 384h1v1h-1z M1005 384h2v1h-2z M1008 381h1v2h-1z M1003 382h1v1h-1z M991 384h1v1h-1z M999 383h1v1h-1z M1026 382h1v1h-1z M1018 382h2v1h-2z M1020 382h1v1h-1z M1022 382h1v1h-1z M1019 383h1v1h-1z M999 384h1v2h-1z M985 384h1v1h-1z M1018 381h1v2h-1z M996 383h2v1h-2z M990 384h1v1h-1z M1015 382h1v1h-1z M1019 381h1v1h-1z M1060 364h1v2h-1z M1055 361h1v1h-1z M1065 363h1v1h-1z M1068 364h1v1h-1z M1065 366h1v1h-1z M1057 362h2v1h-2z M1067 364h2v1h-2z M1058 364h2v2h-2z M1054 363h1v1h-1z M1076 367h1v1h-1z M1059 361h1v1h-1z M1074 366h1v2h-1z M1059 362h1v2h-1z M1073 364h1v1h-1z M1072 365h1v2h-1z M1071 365h1v1h-1z M1072 365h1v1h-1z M1068 364h1v2h-1z M1071 364h2v1h-2z M1070 367h1v1h-1z M1067 364h1v1h-1z M1078 366h2v1h-2z M1061 361h2v1h-2z M1070 366h1v1h-1z M1074 367h2v1h-2z M1070 365h1v2h-1z M1073 367h1v1h-1z M1061 363h1v1h-1z M1061 378h1v2h-1z M1089 383h1v1h-1z M1084 381h1v1h-1z M1088 386h1v1h-1z M1077 383h1v2h-1z M1072 383h1v1h-1z M1057 376h2v1h-2z M1080 385h2v2h-2z M1069 383h1v1h-1z M1058 377h1v2h-1z M1068 381h1v1h-1z M1065 379h1v1h-1z M1078 381h1v2h-1z M1060 377h1v1h-1z M1080 383h1v1h-1z M1072 379h2v1h-2z M1076 380h1v1h-1z M1083 382h2v1h-2z M1082 383h1v1h-1z M1062 379h2v1h-2z M1076 382h2v2h-2z M1081 381h1v1h-1z M1086 384h1v1h-1z M1063 378h1v1h-1z M1068 377h2v1h-2z M1069 380h1v1h-1z M1060 378h2v1h-2z M1076 383h1v1h-1z M1070 379h1v1h-1z M1074 384h2v1h-2z M1067 379h2v2h-2z M1084 384h2v2h-2z M1074 381h1v1h-1z M1090 384h1v1h-1z M1080 385h1v1h-1z M1077 383h1v1h-1z M1067 378h1v1h-1z M1093 386h1v1h-1z M1080 381h2v2h-2z M1075 381h1v2h-1z M1043 405h1v1h-1z M1055 413h1v1h-1z M1049 408h1v1h-1z M1052 414h2v1h-2z M1054 413h1v1h-1z M1052 411h2v1h-2z M1051 412h2v1h-2z M1055 414h2v1h-2z M1045 406h1v1h-1z M1048 408h1v1h-1z M1050 410h1v1h-1z M1047 404h2v1h-2z M1054 412h2v1h-2z M1048 408h1v1h-1z M1023 436h2v1h-2z M1026 433h1v1h-1z M1028 433h2v1h-2z M1024 436h1v1h-1z M1018 434h1v1h-1z M1020 439h1v1h-1z M1027 436h1v1h-1z M1035 429h1v2h-1z M1025 435h1v1h-1z M1022 436h1v1h-1z M1030 429h1v1h-1z M1032 430h1v1h-1z M1028 435h1v1h-1z M1033 429h1v1h-1z M1033 429h1v1h-1z M1025 435h2v1h-2z M1025 434h1v1h-1z M1031 428h1v1h-1z M1026 434h2v1h-2z M1033 428h1v1h-1z M1029 430h1v1h-1z M1032 426h1v1h-1z M1023 436h1v1h-1z M1037 425h1v1h-1z M1029 434h1v1h-1z M1029 431h1v1h-1z M1033 429h1v1h-1z M1037 426h2v2h-2z M1020 439h1v1h-1z M1028 431h1v1h-1z M975 425h3v2h-3z M977 425h3v2h-3z M979 425h3v2h-3z M981 425h3v2h-3z M982 425h3v2h-3z M984 425h3v2h-3z M986 425h3v2h-3z M988 425h3v2h-3z M990 425h3v2h-3z M1096 443h2v1h-2z M1101 443h2v1h-2z M1110 443h1v1h-1z M1108 443h1v1h-1z M1072 442h1v2h-1z M1102 443h1v1h-1z M1085 442h1v2h-1z M1091 442h1v1h-1z M1088 443h1v1h-1z M1082 442h1v1h-1z M1086 443h2v1h-2z M1077 443h1v1h-1z M1107 442h2v1h-2z M1098 442h1v1h-1z M1086 442h1v1h-1z M1071 443h2v1h-2z M1104 443h2v2h-2z M1076 443h1v1h-1z M1102 442h1v1h-1z M1080 443h1v2h-1z M1108 443h2v1h-2z M1114 442h1v1h-1z M1081 443h2v1h-2z M1071 443h1v1h-1z M1105 442h1v1h-1z M1068 442h1v1h-1z M1013 405h1v1h-1z M933 387h1v1h-1z M770 375h1v1h-1z M758 406h1v1h-1z M824 429h1v1h-1z M909 371h1v1h-1z M814 458h1v1h-1z M1098 449h1v1h-1z M796 357h1v1h-1z M912 387h1v1h-1z M996 425h1v1h-1z M996 439h1v1h-1z M889 408h1v1h-1z M857 435h1v1h-1z M860 382h1v1h-1z M864 376h1v1h-1z M811 419h1v1h-1z M836 353h1v1h-1z M862 436h1v1h-1z M1001 446h1v1h-1z M990 402h1v1h-1z M859 358h1v1h-1z M981 419h1v1h-1z M903 357h1v1h-1z M1031 406h1v1h-1z M907 444h1v1h-1z M1078 396h1v1h-1z M997 409h1v1h-1z M1023 430h1v1h-1z M860 356h1v1h-1z M1019 360h1v1h-1z M1073 365h1v1h-1z M1050 454h1v1h-1z M945 357h1v1h-1z M989 354h1v1h-1z M980 444h1v1h-1z M981 387h1v1h-1z M932 366h1v1h-1z M994 429h1v1h-1z M1008 354h1v1h-1z M1068 424h1v1h-1z M936 427h1v1h-1z M861 440h1v1h-1z M961 395h1v1h-1z M834 393h1v1h-1z M1032 428h1v1h-1z M877 448h1v1h-1z M910 411h1v1h-1z M782 454h1v1h-1z M1079 429h1v1h-1z M885 375h1v1h-1z M815 439h1v1h-1z M1016 393h1v1h-1z M821 437h1v1h-1z M1012 451h1v1h-1z M922 445h1v1h-1z M930 438h1v1h-1z M760 406h1v1h-1z M1035 426h1v1h-1z M1092 418h1v1h-1z M990 402h1v1h-1z M1076 399h1v1h-1z M1046 359h1v1h-1z M940 370h1v1h-1z M995 406h1v1h-1z M981 358h1v1h-1z M946 420h1v1h-1z M976 376h1v1h-1z M1081 417h1v1h-1z M988 395h1v1h-1z M1003 373h1v1h-1z M1091 356h1v1h-1z M1048 404h1v1h-1z M1063 392h1v1h-1z M1086 408h1v1h-1z M1043 358h1v1h-1z M1082 366h1v1h-1z M964 375h1v1h-1z M1021 376h1v1h-1z M1010 375h1v1h-1z M978 401h1v1h-1z M1047 359h1v1h-1z M1083 366h1v1h-1z M991 405h1v1h-1z M1077 417h1v1h-1z M783 366h1v1h-1z M791 367h1v1h-1z M785 366h2v2h-2z M787 367h1v1h-1z M778 365h1v1h-1z M773 365h1v1h-1z M768 364h1v1h-1z M783 365h1v2h-1z M777 364h2v1h-2z M778 364h1v1h-1z M775 365h2v2h-2z M790 369h1v1h-1z M764 360h2v1h-2z M788 367h1v2h-1z M1046 349h1v1h-1z M1051 346h1v1h-1z M1051 342h2v2h-2z M1055 347h1v2h-1z M1036 341h1v1h-1z M1056 350h2v1h-2z M1043 342h2v1h-2z M1053 348h1v2h-1z M1059 346h2v1h-2z M1052 349h2v1h-2z M1071 355h2v1h-2z M1067 354h1v1h-1z M1068 351h1v1h-1z M1066 352h2v1h-2z M1065 352h1v1h-1z M1068 356h1v1h-1z M1067 351h2v1h-2z M1066 349h1v1h-1z M1063 348h1v1h-1z M1063 348h2v2h-2z M1020 448h1v1h-1z M1018 438h2v1h-2z M1015 439h1v1h-1z M1021 445h1v2h-1z M1019 445h1v1h-1z M1019 444h2v1h-2z M1020 445h1v1h-1z M1020 442h2v1h-2z M1008 425h1v1h-1z M1012 430h1v1h-1z M1010 425h1v1h-1z M1011 425h1v1h-1z M858 399h1v2h-1z M856 400h2v1h-2z M869 397h1v1h-1z M867 398h2v1h-2z M863 398h1v1h-1z M852 400h2v2h-2z M856 398h1v2h-1z M852 401h2v2h-2z M867 397h1v1h-1z M849 398h2v1h-2z M898 354h1v1h-1z M903 354h1v2h-1z M893 354h1v1h-1z M886 353h1v1h-1z M898 356h1v1h-1z M900 354h1v1h-1z M883 354h1v1h-1z M895 354h1v1h-1z M905 357h1v2h-1z M893 356h1v1h-1z M887 353h1v1h-1z M902 356h2v1h-2z M792 347h1v1h-1z M837 348h1v1h-1z M923 344h1v1h-1z M899 345h1v1h-1z M854 351h1v1h-1z M902 347h1v1h-1z M960 350h1v1h-1z M792 348h1v1h-1z M852 344h1v1h-1z M950 346h1v1h-1z M789 346h1v1h-1z M939 346h1v1h-1z M882 348h1v1h-1z M886 350h1v1h-1z M920 349h1v1h-1z M833 349h1v1h-1z M842 349h1v1h-1z M921 352h1v1h-1z M785 351h1v1h-1z M945 346h1v1h-1z M901 351h1v1h-1z M930 352h1v1h-1z M849 351h1v1h-1z M955 346h1v1h-1z M881 348h1v1h-1z M557 411h1v1h-1z M560 413h1v1h-1z M561 413h1v1h-1z M561 415h1v1h-1z M561 416h2v1h-2z M561 418h2v1h-2z M560 414h1v1h-1z M558 412h1v1h-1z M602 390h1v1h-1z M601 389h1v1h-1z M605 392h1v1h-1z M599 390h1v1h-1z M605 392h1v1h-1z M600 412h1v1h-1z M601 414h1v1h-1z M602 414h1v1h-1z M600 413h1v1h-1z M603 415h1v2h-1z M601 413h1v1h-1z M557 446h1v1h-1z M556 446h2v1h-2z M561 448h1v1h-1z M551 444h1v1h-1z M556 446h1v1h-1z M559 450h2v1h-2z M560 449h1v1h-1z M558 446h2v2h-2z M557 446h1v1h-1z M555 444h1v1h-1z M556 446h2v1h-2z M561 448h1v1h-1z M562 449h1v2h-1z M563 450h1v1h-1z M591 457h1v1h-1z M587 455h2v1h-2z M588 457h1v1h-1z M586 455h1v1h-1z M596 459h1v2h-1z M594 457h1v1h-1z M596 457h1v1h-1z M587 455h1v1h-1z M591 458h2v1h-2z M587 456h1v2h-1z" fill="#000"/>
<g fill="#000"><rect x="924" y="451" width="49" height="17.5"/><rect x="939" y="435" width="11" height="11" rx="2"/><rect x="1032" y="393" width="10" height="7"/><rect x="762" y="476" width="15" height="9"/><path d="M985 338h3v2h-3z M992 333h2v2h-2z M998 337h3v2h-3z M990 341h2v3h-2z M996 342h3v2h-3z M987 331h2v1h-2z M1000 331h2v2h-2z M994 338h2v1h-2z"/></g>
<path d="M930 455h3v12h-3z M948 458h2v2h-2z M951 456h3v2h-3z M954 459h4v2h-4z M957 456h2v2h-2z M950 461h3v1h-3z M935 466h15v2.5h-15z" fill="#fff"/>
<path d="M667.5 425.5h13 M674 419v13" stroke="#000" stroke-width="1.2" fill="none"/>
<rect x="493" y="328" width="7" height="6.5" fill="#6cc12f"/>
<rect x="984" y="318.5" width="7" height="7.5" rx="2" fill="#6cc12f"/>
<g font-family="'Liberation Sans',sans-serif" font-size="29" fill="#e33212" stroke="#e33212" stroke-width="0.35" shape-rendering="auto">
<text x="497.5" y="329.5" textLength="26.6" lengthAdjust="spacingAndGlyphs">#1</text>
<text x="988" y="321.5" textLength="28.6" lengthAdjust="spacingAndGlyphs">#2</text>
</g>
<rect x="355" y="589" width="17" height="17" fill="#fff"/>
<path d="M1044.5 598v8 M1044.5 602h182 M1226.5 598v8" stroke="#ddd" stroke-width="1" fill="none"/>
<g font-family="'Liberation Sans','Noto Sans CJK SC',sans-serif" font-size="10" fill="#e6e6e6" shape-rendering="auto">
<text x="355" y="581">类别</text>
<text x="376" y="601.5">未分类点</text>
<text x="1135" y="595.5" text-anchor="middle" font-size="10.5">68.75</text>
</g>
</svg><!--VIEWEND-->
</div>

<!-- ===== status bar ===== -->
<div id="status">
 <span class="t" style="left:2px">按属性分类: 分类<span style="font-size:10.3px">8307435</span>个点为目标类别！<span style="margin-left:2px">(未读消息:</span><span style="font-size:10.3px;margin-left:6.5px">14</span>)</span>
 <span class="t" style="right:1.5px">当前点数: <span style="font-size:11px">8</span> 百万</span>
</div>
</body>
</html>
